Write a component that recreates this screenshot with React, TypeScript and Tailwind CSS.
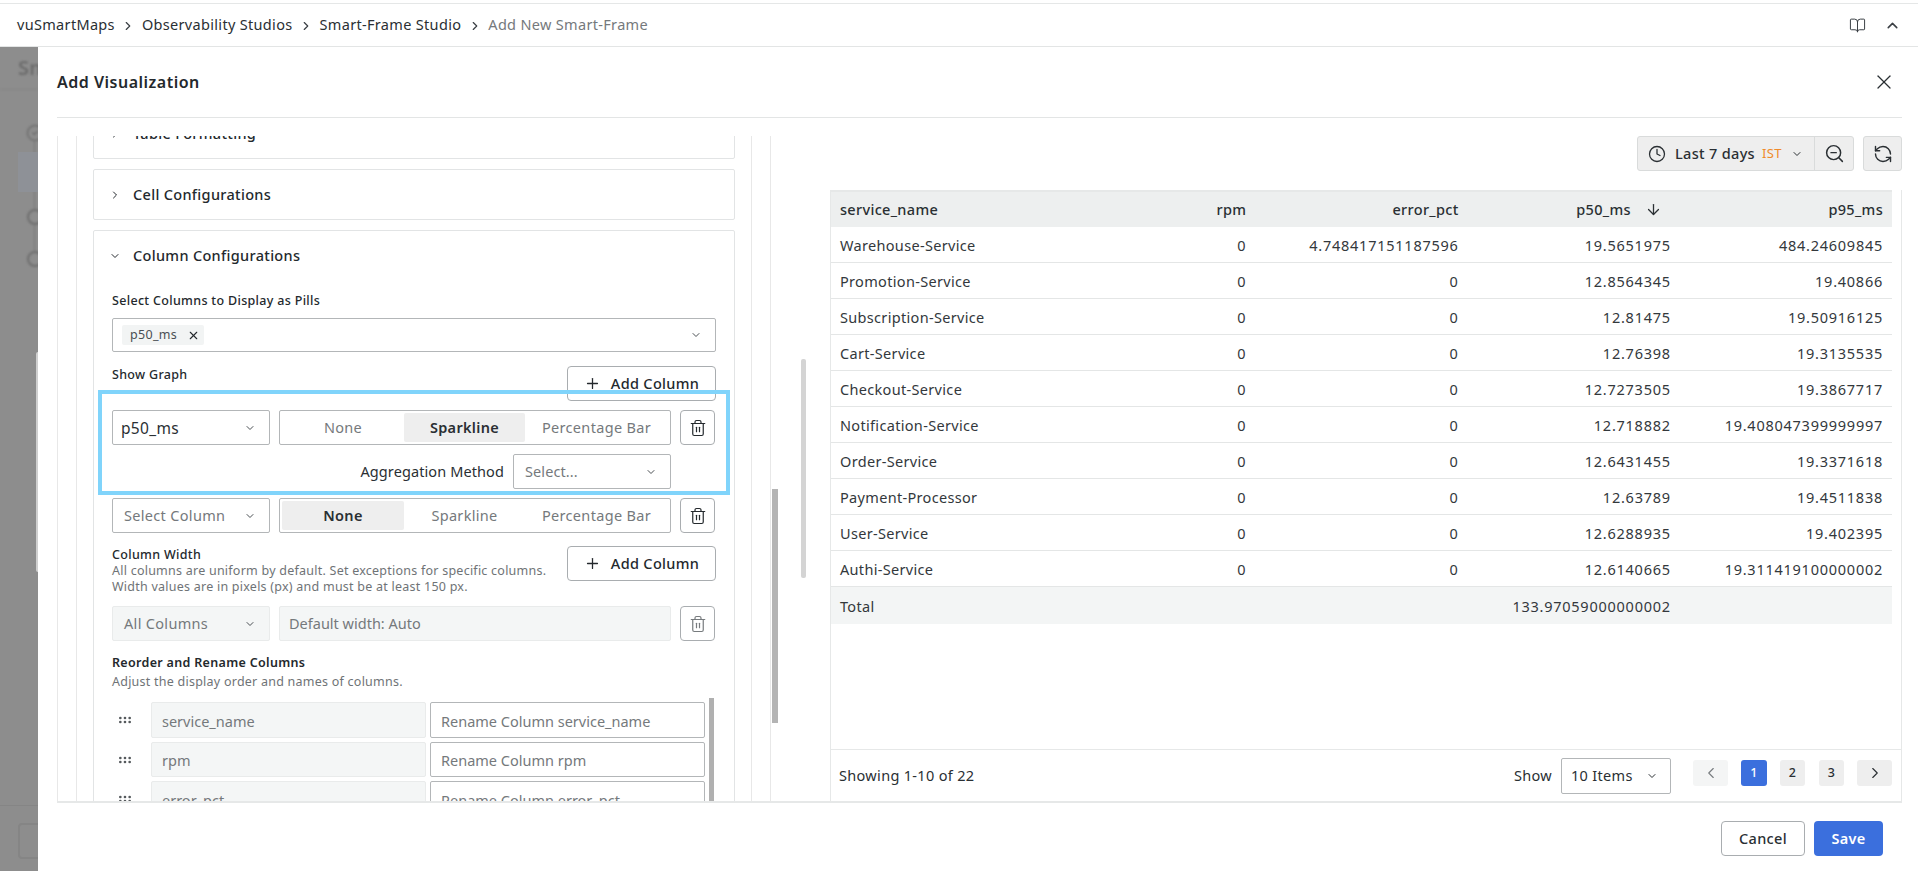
import React from 'react'
import { ArrowDown, BookOpen, ChevronDown, ChevronLeft, ChevronRight, ChevronUp, CircleCheck, Clock, GripHorizontal, Plus, RefreshCcw, Trash2, X, ZoomOut } from 'lucide-react'

const rows = [
    ['Warehouse-Service', '0', '4.748417151187596', '19.5651975', '484.24609845'],
    ['Promotion-Service', '0', '0', '12.8564345', '19.40866'],
    ['Subscription-Service', '0', '0', '12.81475', '19.50916125'],
    ['Cart-Service', '0', '0', '12.76398', '19.3135535'],
    ['Checkout-Service', '0', '0', '12.7273505', '19.3867717'],
    ['Notification-Service', '0', '0', '12.718882', '19.408047399999997'],
    ['Order-Service', '0', '0', '12.6431455', '19.3371618'],
    ['Payment-Processor', '0', '0', '12.63789', '19.4511838'],
    ['User-Service', '0', '0', '12.6288935', '19.402395'],
    ['Authi-Service', '0', '0', '12.6140665', '19.311419100000002'],
]

const Crumb = ({ label }: { label: string }) => (
    <>
        <span>{label}</span>
        <ChevronRight size={14} strokeWidth={2} className="mx-[6.5px] mt-[2px] text-[#3a3f44]" />
    </>
)

const Backdrop = () => (
    <div className="w-[38px] shrink-0 bg-[#8d8d8d] overflow-hidden flex flex-col relative">
        <div className="h-[43px] border-b border-[#858585] pl-[18px] pt-[6px] text-[20px] font-semibold text-[#6c6c6c] blur-[1px] whitespace-nowrap">Sm</div>
        <div className="mt-[35px] pl-[27px] flex flex-col blur-[1px]">
            <CircleCheck size={18} strokeWidth={2} className="shrink-0 -ml-[1px] -my-[1px] text-[#6e6e6e]" />
            <div className="h-[26px] ml-[7px] w-[1px] bg-[#777777]" />
            <div className="w-[16px] h-[16px] shrink-0 rounded-full border-2 border-[#6e6e6e]" />
            <div className="h-[26px] ml-[7px] w-[1px] bg-[#777777]" />
            <div className="w-[16px] h-[16px] shrink-0 rounded-full border-2 border-[#6e6e6e]" />
            <div className="h-[26px] ml-[7px] w-[1px] bg-[#777777]" />
            <div className="w-[16px] h-[16px] shrink-0 rounded-full border-2 border-[#6e6e6e]" />
        </div>
        <div className="absolute left-[18px] top-[105px] w-[20px] h-[40px] bg-[#8e9197]" />
        <div className="absolute left-0 top-[758px] w-full h-[1px] bg-[#858585]" />
        <div className="absolute left-[18px] top-[776px] w-[30px] h-[36px] rounded border-2 border-[#858585]" />
        <div className="absolute left-[36px] top-[305px] w-[4px] h-[220px] rounded-full bg-[#cfcfcf]" />
    </div>
)

const AddColumn = () => (
    <button className="w-[149px] h-[35px] shrink-0 bg-white border border-[#a9adb0] rounded-[4px] flex items-center justify-center gap-[10px] text-[14.5px] font-medium text-[#24292d]">
        <Plus size={17} strokeWidth={1.8} />
        Add Column
    </button>
)

const TrashButton = ({ muted }: { muted?: boolean }) => (
    <button className="w-[35px] h-[35px] shrink-0 border border-[#a9adb0] rounded-[4px] flex items-center justify-center">
        <Trash2 size={18} strokeWidth={1.6} className={muted ? 'text-[#777b7e]' : 'text-[#24292d]'} />
    </button>
)

const SelectBox = ({ label, dark, filled }: { label: string; dark?: boolean; filled?: boolean }) => (
    <div className={`w-[158px] h-[35px] shrink-0 rounded-[2px] border flex items-center justify-between pr-[13px] ${dark ? 'pl-[8px] text-[15.5px] text-[#2a2f33]' : 'pl-[11px] text-[14.5px] text-[#75797c]'} ${filled ? 'bg-[#f4f6f6] border-[#e9ebeb]' : 'bg-white border-[#b3b6b8]'}`}>
        <span className={dark ? 'pt-[2px]' : ''}>{label}</span>
        <ChevronDown size={12} strokeWidth={2} className="text-[#4a4f53]" />
    </div>
)

const Segments = ({ active }: { active: string }) => (
    <div className="w-[392px] h-[35px] shrink-0 bg-white border border-[#b3b6b8] rounded-[2px] flex items-center px-[2px] text-[14.5px] text-[#75797c]">
        {[['None', 'w-[122px]'], ['Sparkline', 'w-[121px]'], ['Percentage Bar', 'flex-1']].map(([label, w]) => (
            <div key={label} className={`${w} h-[29px] rounded-[2px] flex items-center justify-center ${active === label ? 'bg-[#eeeeee] font-semibold text-[#2a2f33]' : ''}`}>
                {label}
            </div>
        ))}
    </div>
)

const ReorderRow = ({ name, h = 'h-[36px]' }: { name: string; h?: string }) => (
    <div className="flex items-center">
        <div className="w-[39px] shrink-0 pl-[5px]">
            <GripHorizontal size={16} strokeWidth={2} className="text-[#55595c]" />
        </div>
        <div className={`w-[275px] ${h} shrink-0 bg-[#f4f6f6] border border-[#e9ebeb] rounded-[2px] flex items-center px-[10px] pt-[3px] text-[14.5px] tracking-normal text-[#75797c]`}>{name}</div>
        <div className={`w-[275px] ${h} shrink-0 ml-[4px] bg-white border border-[#b3b6b8] rounded-[2px] flex items-center px-[10px] pt-[3px] text-[14.5px] tracking-normal text-[#75797c]`}>Rename Column {name}</div>
    </div>
)

const LeftPanel = () => (
    <div className="w-[721px] shrink-0 flex items-start overflow-hidden relative">
        <div className="w-[714px] h-[666px] shrink-0 border-x border-[#e8e8e8] pl-[18px]">
            <div className="w-[676px] h-full border-x border-[#e8e8e8] px-[16px] overflow-hidden">
                <div className="-mt-[28px] flex flex-col gap-[10px]">
                    <div className="h-[51px] bg-white border border-[#e2e4e5] rounded-[2px] flex items-center pl-[15px] pt-[1px] text-[14.5px] font-medium text-[#24292d]">
                        <ChevronRight size={12} strokeWidth={2} className="mr-[12px]" />
                        Table Formatting
                    </div>
                    <div className="h-[51px] bg-white border border-[#e2e4e5] rounded-[2px] flex items-center pl-[15px] pt-[1px] text-[14.5px] font-medium text-[#24292d]">
                        <ChevronRight size={12} strokeWidth={2} className="mr-[12px]" />
                        Cell Configurations
                    </div>
                    <div className="bg-white border border-[#e2e4e5] rounded-[2px] px-[18px]">
                        <div className="h-[61px] pt-[16px] -ml-[3px] flex items-center pb-[27px] text-[14.5px] font-medium text-[#24292d]">
                            <ChevronDown size={12} strokeWidth={2} className="mr-[12px]" />
                            Column Configurations
                        </div>
                        <div className="text-[12.5px] leading-[18px] font-medium text-[#24292d]">Select Columns to Display as Pills</div>
                        <div className="mt-[8px] h-[34px] border border-[#b3b6b8] rounded-[2px] flex items-center justify-between pl-[9px] pr-[13px]">
                            <div className="h-[20px] w-[82px] bg-[#f2f4f4] rounded-[2px] flex items-center justify-between pl-[8px] pr-[4px] text-[12.5px] text-[#4a4f53]">
                                p50_ms
                                <X size={13} strokeWidth={2} className="text-[#24292d]" />
                            </div>
                            <ChevronDown size={12} strokeWidth={2} className="text-[#4a4f53]" />
                        </div>
                        <div className="mt-[14px] flex justify-between">
                            <span className="text-[12.5px] leading-[18px] font-medium text-[#24292d]">Show Graph</span>
                            <AddColumn />
                        </div>
                        <div className="mt-[9px] flex gap-[9px]">
                            <SelectBox label="p50_ms" dark />
                            <Segments active="Sparkline" />
                            <TrashButton />
                        </div>
                        <div className="mt-[9px] flex items-center justify-end pr-[45px] gap-[9px] text-[14.5px] tracking-[0.1px] text-[#2a2f33]">
                            Aggregation Method
                            <SelectBox label="Select..." />
                        </div>
                        <div className="mt-[9px] flex gap-[9px]">
                            <SelectBox label="Select Column" />
                            <Segments active="None" />
                            <TrashButton />
                        </div>
                        <div className="mt-[13px] flex justify-between">
                            <div>
                                <div className="text-[12.5px] leading-[17px] font-medium text-[#24292d]">Column Width</div>
                                <p className="text-[12.5px] leading-[16px] tracking-[0.24px] text-[#6f7376]">All columns are uniform by default. Set exceptions for specific columns.<br />Width values are in pixels (px) and must be at least 150 px.</p>
                            </div>
                            <AddColumn />
                        </div>
                        <div className="mt-[11px] flex gap-[9px]">
                            <SelectBox label="All Columns" filled />
                            <div className="w-[392px] h-[35px] shrink-0 bg-[#f4f6f6] border border-[#e9ebeb] rounded-[2px] flex items-center px-[9px] text-[14.5px] tracking-normal text-[#75797c]">Default width: Auto</div>
                            <TrashButton muted />
                        </div>
                        <div className="mt-[13px] text-[12.5px] leading-[18px] font-semibold text-[#24292d]">Reorder and Rename Columns</div>
                        <div className="mt-[1px] text-[12.5px] leading-[18px] tracking-[0.24px] text-[#6f7376]">Adjust the display order and names of columns.</div>
                        <div className="mt-[11px] flex">
                            <div className="flex flex-col gap-[4px]">
                                <ReorderRow name="service_name" />
                                <ReorderRow name="rpm" h="h-[35px]" />
                                <ReorderRow name="error_pct" />
                            </div>
                            <div className="ml-[4px] -mt-[4px] w-[5px] h-[160px] bg-[#b0b0b0]" />
                        </div>
                    </div>
                </div>
            </div>
        </div>
        <div className="ml-[1px] mt-[353px] w-[6px] h-[234px] bg-[#b4b4b4]" />
        <div className="absolute left-[41px] top-[254px] w-[632px] h-[105px] border-4 border-[#80d4fb]" />
    </div>
)

export default function App() {
    const cell = 'flex-1 min-w-0 pr-[9px] text-right'
    const numCell = 'flex-1 min-w-0 pr-[9px] text-right tracking-[0.75px]'
    const firstCell = 'flex-1 min-w-0 pl-[9px]'
    return (
        <div className="w-[1918px] h-[871px] bg-white overflow-hidden flex flex-col text-[#2a2f33] tracking-[0.32px]" style={{ fontFamily: '"Noto Sans", sans-serif' }}>
            <div className="h-[4px] shrink-0 border-b border-[#e5e7e7]" />
            <div className="h-[43px] shrink-0 border-b border-[#e3e5e5] flex items-center justify-between pl-[17px] pr-[17px] text-[14.5px]">
                <div className="flex items-center">
                    <Crumb label="vuSmartMaps" />
                    <Crumb label="Observability Studios" />
                    <Crumb label="Smart-Frame Studio" />
                    <span className="text-[#75797c]">Add New Smart-Frame</span>
                </div>
                <div className="flex items-center gap-[18px] text-[#3a3f44]">
                    <BookOpen size={17} strokeWidth={1.4} />
                    <ChevronUp size={17} strokeWidth={2.2} />
                </div>
            </div>
            <div className="flex-1 flex min-h-0">
                <Backdrop />
                <div className="flex-1 min-w-0 flex flex-col pl-[19px] pr-[16px]">
                    <div className="h-[71px] shrink-0 border-b border-[#e3e5e5] flex items-center justify-between pr-[6px] pb-[1px]">
                        <h1 className="text-[16px] font-semibold text-[#24292d] tracking-[0.5px]">Add Visualization</h1>
                        <X size={24} strokeWidth={1.3} className="mt-[1px]" />
                    </div>
                    <div className="mt-[18px] h-[667px] shrink-0 border-b-2 border-[#e6e8e8] flex">
                        <LeftPanel />
                        <div className="w-[52px] shrink-0 pl-[23px]">
                            <div className="mt-[223px] w-[5px] h-[219px] rounded-[2px] bg-[#d4d4d4]" />
                        </div>
                        <div className="flex-1 min-w-0 flex flex-col">
                            <div className="h-[54px] shrink-0 flex justify-end items-start gap-[9px]">
                                <div className="h-[35px] w-[217px] bg-[#eeeeee] border border-[#d9dbdb] rounded-[3px] flex items-center text-[14.5px]">
                                    <div className="flex-1 flex items-center pl-[10px] gap-[9px]">
                                        <Clock size={18} strokeWidth={1.7} />
                                        <span className="font-medium">Last 7 days</span>
                                        <span className="text-[13px] text-[#ef8a2a] -ml-[2px]">IST</span>
                                        <ChevronDown size={12} strokeWidth={2} />
                                    </div>
                                    <div className="w-[39px] h-full border-l border-[#d9dbdb] flex items-center justify-center">
                                        <ZoomOut size={21} strokeWidth={1.7} />
                                    </div>
                                </div>
                                <div className="h-[35px] w-[39px] bg-[#eeeeee] border border-[#d9dbdb] rounded-[3px] flex items-center justify-center">
                                    <RefreshCcw size={20} strokeWidth={1.7} />
                                </div>
                            </div>
                            <div className="flex-1 min-h-0 border-x border-[#e6e8e8] flex flex-col pr-[9px]">
                                <div className="h-[37px] shrink-0 border-t-2 border-[#e6e8e8] bg-[#edefef] flex items-center text-[14.5px] font-medium">
                                    <div className={firstCell}>service_name</div>
                                    <div className={cell}>rpm</div>
                                    <div className={cell}>error_pct</div>
                                    <div className="flex-1 min-w-0 pr-[9px] flex justify-end items-center gap-[14px]">
                                        p50_ms
                                        <ArrowDown size={17} strokeWidth={1.8} className="mr-[9px]" />
                                    </div>
                                    <div className={cell}>p95_ms</div>
                                </div>
                                {rows.map((row, index) => (
                                    <div key={index} className="h-[36px] shrink-0 pt-[3px] border-b border-[#e4e6e6] flex items-center text-[14.5px] text-[#33383c]">
                                        <div className={firstCell}>{row[0]}</div>
                                        <div className={numCell}>{row[1]}</div>
                                        <div className={numCell}>{row[2]}</div>
                                        <div className={numCell}>{row[3]}</div>
                                        <div className={numCell}>{row[4]}</div>
                                    </div>
                                ))}
                                <div className="h-[37px] shrink-0 pt-[3px] bg-[#f3f5f5] flex items-center text-[14.5px] text-[#33383c]">
                                    <div className={firstCell}>Total</div>
                                    <div className={cell} />
                                    <div className={cell} />
                                    <div className={numCell}>133.97059000000002</div>
                                    <div className={cell} />
                                </div>
                                <div className="flex-1" />
                                <div className="h-[52px] shrink-0 -mr-[9px] border-t border-[#e6e8e8] flex items-center justify-between pl-[8px] pr-[9px] text-[14.5px]">
                                    <span>Showing 1-10 of 22</span>
                                    <div className="flex items-center">
                                        <span>Show</span>
                                        <div className="ml-[9px] w-[110px] h-[36px] border border-[#b3b6b8] rounded-[2px] flex items-center justify-between pl-[9px] pr-[12px]">
                                            10 Items
                                            <ChevronDown size={12} strokeWidth={2} />
                                        </div>
                                        <div className="ml-[22px] flex items-center -mt-[5px] text-[12.5px] font-medium">
                                            <div className="w-[35px] h-[26px] rounded-[3px] bg-[#f4f5f5] flex items-center justify-center text-[#777b7e]"><ChevronLeft size={18} strokeWidth={1.5} /></div>
                                            <div className="ml-[13px] w-[26px] h-[26px] rounded-[3px] bg-[#3b6fdd] text-white flex items-center justify-center">1</div>
                                            <div className="ml-[13px] w-[25px] h-[26px] rounded-[3px] bg-[#eeeeee] flex items-center justify-center">2</div>
                                            <div className="ml-[14px] w-[25px] h-[26px] rounded-[3px] bg-[#eeeeee] flex items-center justify-center">3</div>
                                            <div className="ml-[13px] w-[35px] h-[26px] rounded-[3px] bg-[#eeeeee] flex items-center justify-center"><ChevronRight size={18} strokeWidth={1.5} /></div>
                                        </div>
                                    </div>
                                </div>
                            </div>
                        </div>
                    </div>
                    <div className="mt-[18px] flex justify-end gap-[9px] pr-[19px]">
                        <button className="w-[84px] h-[35px] bg-white border border-[#a9adb0] rounded-[4px] text-[14.5px] font-medium">Cancel</button>
                        <button className="w-[69px] h-[35px] bg-[#3b6fdd] rounded-[4px] text-[14.5px] font-semibold text-white">Save</button>
                    </div>
                </div>
            </div>
        </div>
    )
}
